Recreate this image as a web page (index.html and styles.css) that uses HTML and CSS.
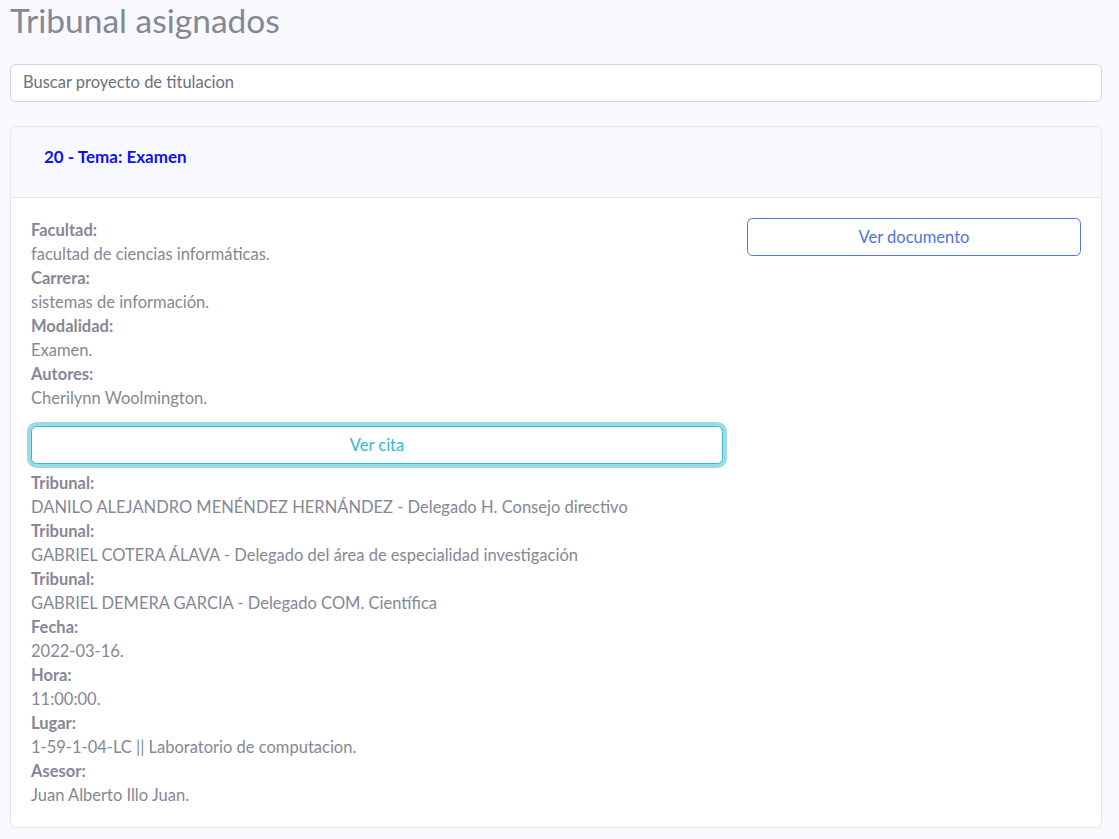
FILE: index.html
```html
<!DOCTYPE html>
<html lang="es">
<head>
<meta charset="utf-8">
<title>Tribunal asignados</title>
<link rel="stylesheet" href="styles.css">
</head>
<body>
<div class="page">
  <h1 class="title">Tribunal asignados</h1>
  <input class="search" type="text" placeholder="Buscar proyecto de titulacion">
  <div class="card">
    <div class="card-header">
      <span class="card-title">20 - Tema: Examen</span>
    </div>
    <div class="card-body">
      <div class="col-main">
        <div class="label">Facultad:</div>
        <div class="value">facultad de ciencias informáticas.</div>
        <div class="label">Carrera:</div>
        <div class="value">sistemas de información.</div>
        <div class="label">Modalidad:</div>
        <div class="value">Examen.</div>
        <div class="label">Autores:</div>
        <div class="value">Cherilynn Woolmington.</div>
        <button class="btn btn-info">Ver cita</button>
        <div class="label">Tribunal:</div>
        <div class="value">DANILO ALEJANDRO MENÉNDEZ HERNÁNDEZ - Delegado H. Consejo directivo</div>
        <div class="label">Tribunal:</div>
        <div class="value">GABRIEL COTERA ÁLAVA - Delegado del área de especialidad investigación</div>
        <div class="label">Tribunal:</div>
        <div class="value">GABRIEL DEMERA GARCIA - Delegado COM. Científica</div>
        <div class="label">Fecha:</div>
        <div class="value">2022-03-16.</div>
        <div class="label">Hora:</div>
        <div class="value">11:00:00.</div>
        <div class="label">Lugar:</div>
        <div class="value">1-59-1-04-LC || Laboratorio de computacion.</div>
        <div class="label">Asesor:</div>
        <div class="value">Juan Alberto Illo Juan.</div>
      </div>
      <div class="col-side">
        <button class="btn btn-primary">Ver documento</button>
      </div>
    </div>
  </div>
</div>
</body>
</html>
```
FILE: styles.css
```css
* { box-sizing: border-box; }

body {
  margin: 0;
  background: #f8f9fc;
  font-family: "Lato", "Open Sans", sans-serif;
  font-size: 16.5px;
  line-height: 24px;
  color: #858796;
}

.page {
  padding: 0 17px 0 10px;
}

.title {
  margin: 0 0 24px;
  height: 40px;
  font-size: 33.5px;
  line-height: 40px;
  font-weight: 400;
  color: #858796;
}

.search {
  display: block;
  width: 100%;
  height: 38px;
  padding: 5px 12px 7px;
  border: 1px solid #d1d3e2;
  border-radius: 5.6px;
  background: #fff;
  font-family: inherit;
  font-size: 16.5px;
  line-height: 24px;
  color: #6e707e;
  outline: none;
}

.search::placeholder {
  color: #6e707e;
}

.card {
  margin-top: 24px;
  background: #fff;
  border: 1px solid #e3e6f0;
  border-radius: 5.6px;
  overflow: hidden;
}

.card-header {
  height: 71px;
  padding: 18px 33px 0;
  background: #f8f9fc;
  border-bottom: 1px solid #e3e6f0;
}

.card-title {
  font-weight: 700;
  font-size: 17px;
  line-height: 24px;
  color: #1010f5;
}

.card-body {
  display: grid;
  grid-template-columns: calc(66.6667% - 8px) 1fr;
  gap: 24px;
  padding: 20px;
}

.label {
  font-weight: 700;
}

.btn {
  display: block;
  width: 100%;
  height: 38px;
  padding: 6px 12px;
  background: #fff;
  border: 1px solid;
  border-radius: 5.6px;
  font-family: inherit;
  font-size: 16.5px;
  line-height: 24px;
  cursor: pointer;
}

.btn-info {
  margin: 16px 0 7px;
  color: #36b9cc;
  border-color: #36b9cc;
  box-shadow: 0 0 0 4px rgba(54, 185, 204, 0.5);
}

.btn-primary {
  color: #4e73df;
  border-color: #4e73df;
}
```
